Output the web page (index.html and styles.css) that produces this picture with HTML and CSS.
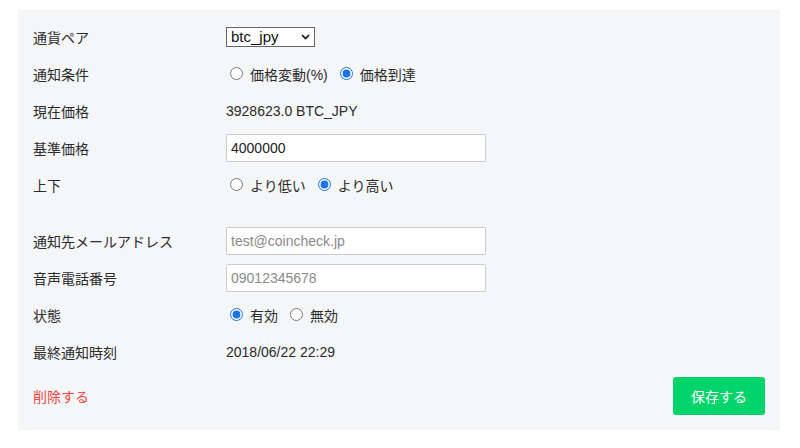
FILE: index.html
```html
<!DOCTYPE html>
<html lang="ja">

<head>
    <meta charset="UTF-8" />
    <title>通知設定</title>
    <link rel="stylesheet" href="styles.css">
</head>

<body>

    <div class="panel">
        <div class="row">
            <div class="label">通貨ペア</div>
            <div class="value">
                <span class="select-wrap">
                    <select class="pair">
                        <option>btc_jpy</option>
                    </select>
                    <svg class="chevron" width="9" height="6" viewBox="0 0 9 6">
                        <path d="M1 1 L4.5 4.5 L8 1" fill="none" stroke="#111" stroke-width="1.6" />
                    </svg>
                </span>
            </div>
        </div>

        <div class="row">
            <div class="label">通知条件</div>
            <div class="value">
                <label class="radio"><input type="radio" name="cond" /> 価格変動(%)</label>
                <label class="radio"><input type="radio" name="cond" checked /> 価格到達</label>
            </div>
        </div>

        <div class="row">
            <div class="label">現在価格</div>
            <div class="value">3928623.0 BTC_JPY</div>
        </div>

        <div class="row">
            <div class="label">基準価格</div>
            <div class="value"><input class="text" type="text" value="4000000" /></div>
        </div>

        <div class="row">
            <div class="label">上下</div>
            <div class="value">
                <label class="radio"><input type="radio" name="dir" /> より低い</label>
                <label class="radio"><input type="radio" name="dir" checked /> より高い</label>
            </div>
        </div>

        <div class="spacer"></div>

        <div class="row">
            <div class="label">通知先メールアドレス</div>
            <div class="value"><input class="text" type="text" placeholder="test@coincheck.jp" /></div>
        </div>

        <div class="row">
            <div class="label">音声電話番号</div>
            <div class="value"><input class="text" type="text" placeholder="09012345678" /></div>
        </div>

        <div class="row">
            <div class="label">状態</div>
            <div class="value">
                <label class="radio"><input type="radio" name="state" checked /> 有効</label>
                <label class="radio"><input type="radio" name="state" /> 無効</label>
            </div>
        </div>

        <div class="row">
            <div class="label">最終通知時刻</div>
            <div class="value">2018/06/22 22:29</div>
        </div>

        <div class="footer">
            <a class="delete" href="#">削除する</a>
            <button class="save">保存する</button>
        </div>
    </div>

</body>

</html>
```

FILE: styles.css
```css
body {
    margin: 0;
    padding: 10px 20px 0 18px;
    background: #fff;
    font-family: "Liberation Sans", "Noto Sans CJK JP", sans-serif;
    font-size: 14px;
    color: #2b2b2b;
}

.panel {
    background: #f5f6f8;
    padding: 8px 15px 15px 15px;
}

.row {
    display: grid;
    grid-template-columns: 193px 1fr;
    align-items: center;
    height: 37px;
}

.value {
    display: flex;
    align-items: center;
}

.spacer {
    height: 19px;
}

.select-wrap {
    position: relative;
    display: inline-block;
}

.pair {
    appearance: none;
    width: 89px;
    height: 20px;
    padding: 0 0 0 4px;
    border: 1px solid #666;
    border-radius: 0;
    background: #fff;
    font-family: "Liberation Sans", sans-serif;
    font-size: 15px;
    color: #111;
    line-height: 18px;
}

.chevron {
    position: absolute;
    right: 5px;
    top: 7px;
}

.radio {
    display: inline-flex;
    align-items: center;
    margin-right: 8px;
}

.radio input {
    margin: 0 7px 0 4px;
    width: 13px;
    height: 13px;
    accent-color: #1a73e8;
}

.text {
    width: 260px;
    height: 28px;
    box-sizing: border-box;
    padding: 0 4px;
    border: 1px solid #ccc;
    border-radius: 2px;
    background: #fff;
    font-family: "Liberation Sans", sans-serif;
    font-size: 14px;
    color: #222;
}

.text::placeholder {
    color: #8a8a8a;
}

.footer {
    display: flex;
    justify-content: space-between;
    align-items: center;
    margin-top: 7px;
}

.delete {
    color: #f0483e;
    text-decoration: none;
}

.save {
    width: 92px;
    height: 38px;
    border: none;
    border-radius: 3px;
    background: #00d46a;
    color: #fff;
    font-family: "Noto Sans CJK JP", sans-serif;
    font-size: 14px;
    cursor: pointer;
}
```
